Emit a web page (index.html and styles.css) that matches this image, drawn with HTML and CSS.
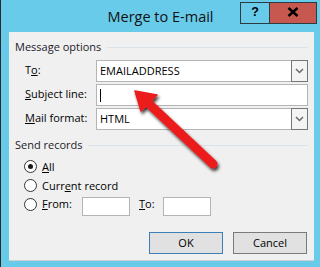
FILE: index.html
```html
<!DOCTYPE html>
<html>
<head>
<meta charset="utf-8">
<link rel="stylesheet" href="styles.css">
</head>
<body>
<div class="window">
  <div class="titlebar">
    <div class="tb-side"></div>
    <div class="title">Merge to E-mail</div>
    <div class="tb-side tb-right">
      <div class="cbtn help">?</div>
      <div class="cbtn close">
        <svg width="12" height="10" viewBox="0 0 12 10"><path d="M1.5 1 L10.5 9 M10.5 1 L1.5 9" stroke="#000" stroke-width="2.4" fill="none"/></svg>
      </div>
    </div>
  </div>
  <div class="client">
    <div class="group-head"><span class="gtitle">Message options</span><span class="rule"></span></div>
    <div class="fields">
      <div class="field-row">
        <span class="flabel">T<u>o</u>:</span>
        <div class="box combo"><span class="val">EMAILADDRESS</span><span class="drop"><svg width="9" height="6" viewBox="0 0 9 6"><path d="M1 1 L4.5 4.5 L8 1" stroke="#6a6a6a" stroke-width="1.5" fill="none"/></svg></span></div>
      </div>
      <div class="field-row">
        <span class="flabel"><u>S</u>ubject line:</span>
        <div class="box"><span class="caret"></span></div>
      </div>
      <div class="field-row">
        <span class="flabel"><u>M</u>ail format:</span>
        <div class="box combo"><span class="val">HTML</span><span class="drop"><svg width="9" height="6" viewBox="0 0 9 6"><path d="M1 1 L4.5 4.5 L8 1" stroke="#6a6a6a" stroke-width="1.5" fill="none"/></svg></span></div>
      </div>
    </div>
    <div class="group-head send"><span class="gtitle">Send records</span><span class="rule"></span></div>
    <div class="radios">
      <div class="radio-row"><span class="radio checked"></span><span class="rlabel"><u>A</u>ll</span></div>
      <div class="radio-row"><span class="radio"></span><span class="rlabel">Curr<u>e</u>nt record</span></div>
      <div class="radio-row from-row">
        <span class="radio"></span><span class="rlabel from-label"><u>F</u>rom:</span>
        <span class="small-box"></span>
        <span class="rlabel to-label"><u>T</u>o:</span>
        <span class="small-box"></span>
      </div>
    </div>
    <div class="buttons">
      <div class="btn default">OK</div>
      <div class="btn">Cancel</div>
    </div>
  </div>
  <svg class="arrow" width="320" height="267" viewBox="0 0 320 267">
    <defs>
      <filter id="sh" x="-20%" y="-20%" width="140%" height="140%">
        <feDropShadow dx="1.5" dy="2.5" stdDeviation="1.6" flood-color="#000" flood-opacity="0.75"/>
      </filter>
    </defs>
    <g filter="url(#sh)">
      <line x1="147" y1="102" x2="213" y2="164" stroke="#ec1c1f" stroke-width="9" stroke-linecap="round"/>
      <path d="M135 91 L157 95 L151 101 L146 106 L141 111 Z" fill="#ec1c1f" stroke="#ec1c1f" stroke-width="1.5" stroke-linejoin="round"/>
    </g>
  </svg>
</div>
</body>
</html>
```

FILE: styles.css
```css
html, body {
  margin: 0;
  padding: 0;
}
body {
  width: 320px;
  height: 267px;
  overflow: hidden;
  font-family: "Open Sans", "Noto Sans", sans-serif;
  font-size: 11px;
  color: #000;
}
.window {
  position: relative;
  box-sizing: border-box;
  width: 320px;
  height: 267px;
  background: #68cbe9;
  border-left: 1px solid #2a2a2a;
  display: flex;
  flex-direction: column;
}
.titlebar {
  height: 32px;
  display: grid;
  grid-template-columns: 1fr auto 1fr;
}
.title {
  font-size: 14.5px;
  line-height: 20px;
  padding-top: 7px;
  color: #111;
}
.tb-right {
  display: flex;
  justify-content: flex-end;
  align-items: flex-start;
  padding-top: 2px;
  padding-right: 3px;
}
.cbtn {
  box-sizing: border-box;
  height: 22px;
  border: 1px solid #2d3a40;
  display: flex;
  align-items: center;
  justify-content: center;
}
.help {
  width: 29px;
  border-right: none;
  background: #68cbe9;
  font-family: "Liberation Sans", Arial, sans-serif;
  font-weight: bold;
  font-size: 12.5px;
  line-height: 20px;
  padding-bottom: 2px;
}
.close {
  width: 48px;
  background: #c6584f;
  padding-bottom: 2px;
}
.client {
  box-sizing: border-box;
  height: 229px;
  margin: 0 6px 0 8px;
  background: #f0f0f0;
  border-bottom: 1px solid #cfcfcf;
  padding-top: 7px;
}
.group-head {
  height: 16px;
  line-height: 16px;
  display: flex;
  align-items: center;
  padding-left: 6px;
  padding-right: 6px;
  gap: 6px;
  color: #1c1a2a;
}
.rule {
  flex: 1;
  height: 1px;
  background: #dbe3e8;
}
.fields {
  margin-top: 5px;
  padding-left: 16px;
  display: flex;
  flex-direction: column;
  gap: 2px;
}
.field-row {
  display: flex;
  align-items: center;
  height: 22px;
}
.flabel {
  width: 71px;
  line-height: 16px;
  margin-top: -3px;
}
.box {
  box-sizing: border-box;
  width: 212px;
  height: 22px;
  background: #fff;
  border: 1px solid #b4b4b4;
  display: flex;
  align-items: center;
}
.val {
  flex: 1;
  padding-left: 3px;
  line-height: 16px;
}
.drop {
  box-sizing: border-box;
  width: 17px;
  height: 22px;
  margin: -1px -1px -1px 0;
  border: 1px solid #767676;
  background: #f4f4f4;
  display: flex;
  align-items: center;
  justify-content: center;
}
.caret {
  width: 1px;
  height: 13px;
  background: #000;
  margin-left: 3px;
}
.send {
  margin-top: 7px;
  gap: 5px;
}
.radios {
  margin-top: 4px;
  padding-left: 15px;
}
.radio-row {
  display: flex;
  align-items: center;
  height: 19px;
}
.radio {
  box-sizing: border-box;
  width: 13px;
  height: 13px;
  border-radius: 50%;
  border: 1px solid #333;
  background: #fff;
  display: flex;
  align-items: center;
  justify-content: center;
}
.radio.checked::after {
  content: "";
  width: 5px;
  height: 5px;
  border-radius: 50%;
  background: #1a1a1a;
}
.rlabel {
  margin-left: 5px;
  line-height: 16px;
}
.from-row {
  height: 21px;
  align-items: flex-start;
}
.from-row .radio {
  margin-top: 3px;
}
.from-row .rlabel {
  margin-top: 1px;
}
.from-label {
  width: 40px;
}
.to-label {
  margin-left: 9px;
  width: 24px;
}
.small-box {
  box-sizing: border-box;
  width: 48px;
  height: 19px;
  margin-top: 2px;
  background: #fff;
  border: 1px solid #b4b4b4;
}
.buttons {
  margin-top: 16px;
  display: flex;
  justify-content: flex-end;
  gap: 10px;
  padding-right: 7px;
}
.btn {
  box-sizing: border-box;
  width: 74px;
  height: 22px;
  background: #e1e1e1;
  border: 1px solid #7a7a7a;
  display: flex;
  align-items: center;
  justify-content: center;
  line-height: 16px;
}
.btn.default {
  border-color: #3c7fb8;
}
.arrow {
  position: absolute;
  left: -1px;
  top: 0;
  pointer-events: none;
}
```
